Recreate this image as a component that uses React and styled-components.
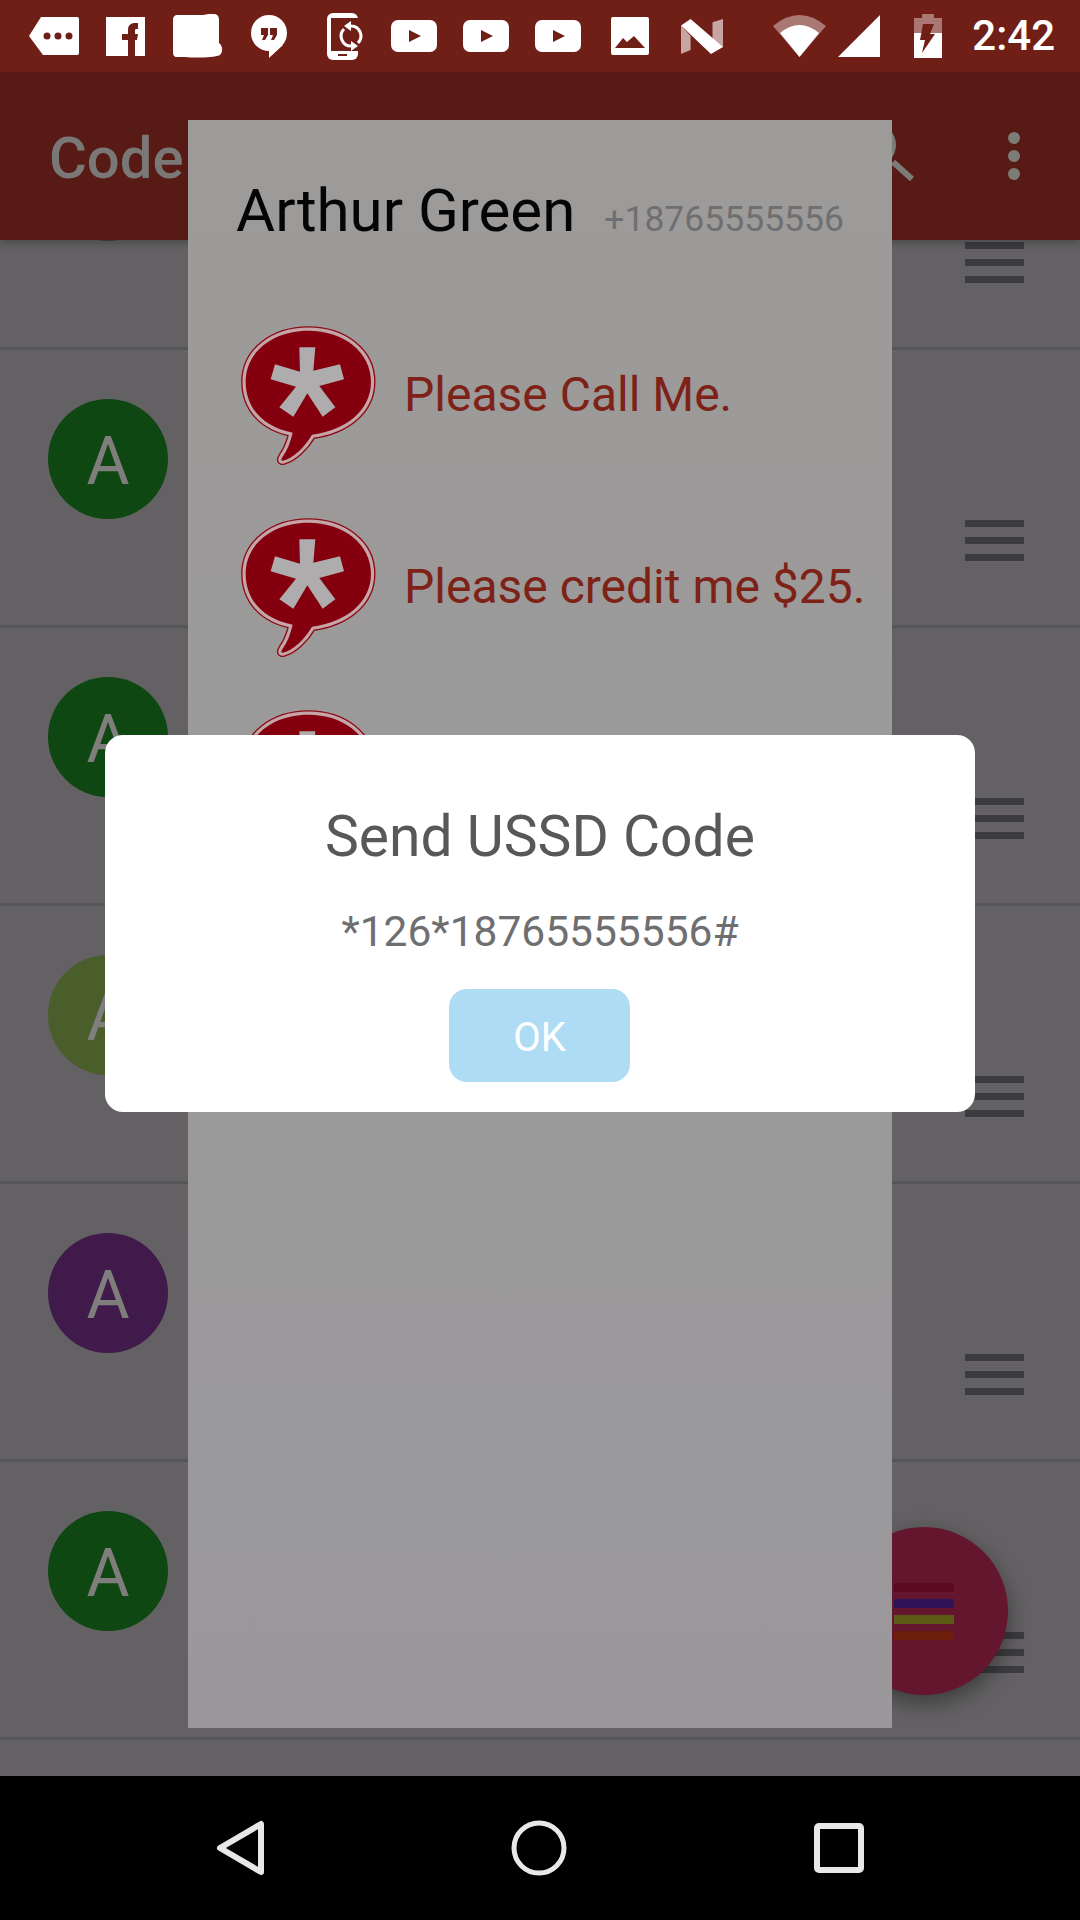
import React from 'react'
import styled, { createGlobalStyle } from 'styled-components';

const STATUS_BG = '#701f17';

const GlobalStyle = createGlobalStyle`
  html, body {
    margin: 0;
    padding: 0;
    background: #000;
  }
  * {
    box-sizing: border-box;
  }
`;

const Screen = styled.div`
  width: 1080px;
  height: 1920px;
  position: relative;
  overflow: hidden;
  display: flex;
  flex-direction: column;
  background-color: #636163;
  font-family: Roboto, "Liberation Sans", sans-serif;
`;

const StatusBar = styled.div`
  height: 72px;
  flex: none;
  display: flex;
  align-items: center;
  padding: 0 25px 0 29px;
  background-color: ${STATUS_BG};
  position: relative;
  z-index: 2;
`;

const StatusIcon = styled.svg`
  flex: none;
  display: block;
  margin-left: ${(p) => p.$gap || 0}px;
`;

const Clock = styled.span`
  margin-left: auto;
  font-size: 42px;
  font-weight: 500;
  line-height: 1;
  color: #fff;
`;

const Toolbar = styled.div`
  height: 168px;
  flex: none;
  display: flex;
  align-items: center;
  padding: 0 60px 0 49px;
  background-color: #571a14;
  position: relative;
  z-index: 1;
  box-shadow: 0 3px 8px rgba(0, 0, 0, 0.25);
`;

const ToolbarTitle = styled.div`
  font-size: 58px;
  font-weight: 500;
  color: #7a7877;
  margin-top: 4px;
`;

const SearchIcon = styled.svg`
  margin-left: auto;
  display: block;
`;

const MoreDots = styled.div`
  margin-left: 93px;
  display: flex;
  flex-direction: column;
  gap: 6px;
`;

const Dot = styled.div`
  width: 12px;
  height: 12px;
  border-radius: 50%;
  background-color: #7c7c78;
`;

const List = styled.div`
  flex: 1;
  min-height: 0;
  margin-top: -168px;
`;

const Row = styled.div`
  height: 278px;
  display: flex;
  align-items: flex-start;
  padding: 49px 56px 0 48px;
  border-bottom: 3px solid #565557;
`;

const Avatar = styled.div`
  width: 120px;
  height: 120px;
  border-radius: 50%;
  display: flex;
  align-items: center;
  justify-content: center;
  background-color: ${(p) => p.$color};
  color: #7f7e7d;
  font-size: 66px;
  padding-top: 5px;
`;

const Handle = styled.div`
  margin-left: auto;
  margin-top: 121px;
  width: 59px;
  display: flex;
  flex-direction: column;
  gap: 10px;
`;

const HandleBar = styled.div`
  height: 7px;
  background-color: #3c3b3e;
`;

const Fab = styled.div`
  position: absolute;
  left: 840px;
  top: 1527px;
  width: 168px;
  height: 168px;
  border-radius: 50%;
  background-color: #64162f;
  box-shadow: 0 8px 22px rgba(0, 0, 0, 0.4);
  display: flex;
  flex-direction: column;
  align-items: center;
  justify-content: center;
  gap: 7px;
`;

const FabBar = styled.div`
  width: 60px;
  height: 9px;
  background-color: ${(p) => p.$color};
`;

const NavBar = styled.div`
  height: 144px;
  flex: none;
  display: flex;
  align-items: center;
  justify-content: center;
  gap: 247px;
  background-color: #000;
  position: relative;
  z-index: 1;
`;

const NavIcon = styled.svg`
  display: block;
`;

const Sheet = styled.div`
  position: absolute;
  left: 188px;
  top: 120px;
  width: 704px;
  height: 1608px;
  z-index: 3;
  background: linear-gradient(#9c9b99, #9a989b);
  padding: 56px 0 0 48px;
`;

const SheetHeader = styled.div`
  display: flex;
  align-items: baseline;
  gap: 29px;
`;

const ContactName = styled.div`
  font-size: 60px;
  line-height: 70px;
  color: #050505;
`;

const ContactPhone = styled.div`
  font-size: 35.5px;
  color: #6f6e70;
`;

const Messages = styled.div`
  display: flex;
  flex-direction: column;
  gap: 53px;
  margin: 79px 0 0 5px;
`;

const Message = styled.div`
  display: flex;
  align-items: flex-start;
  gap: 28px;
  height: 139px;
`;

const MessageText = styled.div`
  font-size: 48px;
  line-height: 56px;
  margin-top: 42px;
  color: #7e2218;
  white-space: nowrap;
`;

const Dialog = styled.div`
  position: absolute;
  left: 105px;
  top: 735px;
  width: 870px;
  height: 377px;
  z-index: 4;
  border-radius: 18px;
  background-color: #fff;
  display: flex;
  flex-direction: column;
  align-items: center;
  padding-top: 69px;
`;

const DialogTitle = styled.div`
  font-size: 57px;
  line-height: 66px;
  color: #58585a;
`;

const DialogCode = styled.div`
  font-size: 42.5px;
  line-height: 50px;
  margin-top: 37px;
  color: #6f6e71;
`;

const OkButton = styled.div`
  width: 181px;
  height: 93px;
  margin: 32px 1px 0 0;
  padding-top: 4px;
  border-radius: 18px;
  display: flex;
  align-items: center;
  justify-content: center;
  font-size: 40px;
  color: #fff;
  background-color: #aedcf4;
`;

const bubblePath = 'M338 398 C245 380 197 320 197 245 C197 155 280 92 385 92 C490 92 573 155 573 245 C573 330 500 390 396 404 C375 440 340 475 308 482 C302 482 304 476 308 470 C322 450 332 425 338 398 Z';

const BubbleIcon = () => (
  <svg width="135" height="140" viewBox="183 75 405 420">
    <path d={bubblePath} fill="none" stroke="#8b0a14" strokeWidth="27" strokeLinejoin="round" />
    <path d={bubblePath} fill="none" stroke="#c4a6a8" strokeWidth="19" strokeLinejoin="round" />
    <path d={bubblePath} fill="#85000e" />
    <polygon
      fill="#aeacad"
      points="358,142 406,142 400,212 480,193 492,238 418,258 466,322 428,350 382,280 340,350 298,322 348,260 272,238 285,193 360,215"
    />
  </svg>
);

const YouTubeIcon = ({ gap }) => (
  <StatusIcon $gap={gap} width="46" height="32" viewBox="0 0 46 32">
    <rect width="46" height="32" rx="7" fill="#fff" />
    <polygon points="18,10 30,16 18,22" fill={STATUS_BG} />
  </StatusIcon>
);

const StatusIcons = () => (
  <>
    <StatusIcon width="50" height="38" viewBox="0 0 50 38">
      <path d="M12 0 H48 a2 2 0 0 1 2 2 V36 a2 2 0 0 1 -2 2 H14 L0 19 Z" fill="#fff" />
      <circle cx="18" cy="19" r="3.5" fill={STATUS_BG} />
      <circle cx="29" cy="19" r="3.5" fill={STATUS_BG} />
      <circle cx="40" cy="19" r="3.5" fill={STATUS_BG} />
    </StatusIcon>
    <StatusIcon $gap={27} width="39" height="39" viewBox="0 0 39 39">
      <rect width="39" height="39" fill="#fff" />
      <path d="M22 39 V23 H16 V17 H22 V13 C22 8 25 6 29 6 H32 V12 H30 C29 12 29 13 29 14 V17 H32 L31 23 H29 V39 Z" fill={STATUS_BG} />
    </StatusIcon>
    <StatusIcon $gap={28} width="50" height="44" viewBox="0 0 50 44">
      <path d="M4 1 H30 C34 0 41 -1 44 1 C46 2 46 5 46 8 V29 C50 32 50 38 47 41 C40 44 20 44 12 43 H4 C1 43 0 41 0 38 V5 C0 3 2 1 4 1 Z" fill="#fff" />
    </StatusIcon>
    <StatusIcon $gap={28} width="36" height="43" viewBox="0 0 36 43">
      <circle cx="18" cy="18" r="18" fill="#fff" />
      <path d="M18 30 V43 L32 30 Z" fill="#fff" />
      <path d="M10 13 H17 V20 L14 25 H11 L13 20 H10 Z M19 13 H26 V20 L23 25 H20 L22 20 H19 Z" fill={STATUS_BG} />
    </StatusIcon>
    <StatusIcon $gap={40} width="36" height="47" viewBox="0 0 36 47">
      <rect width="31" height="47" rx="6" fill="#fff" />
      <rect x="4" y="5" width="30" height="33" fill={STATUS_BG} />
      <rect x="11" y="41" width="9" height="2" fill={STATUS_BG} />
      <path d="M24 13 A10 10 0 0 1 31 30" fill="none" stroke="#fff" strokeWidth="3" />
      <path d="M24 33 A10 10 0 0 1 17 16" fill="none" stroke="#fff" strokeWidth="3" />
      <polygon points="24,8 24,18 17,13" fill="#fff" />
      <polygon points="24,28 24,38 31,33" fill="#fff" />
    </StatusIcon>
    <YouTubeIcon gap={28} />
    <YouTubeIcon gap={26} />
    <YouTubeIcon gap={26} />
    <StatusIcon $gap={30} width="38" height="38" viewBox="0 0 38 38">
      <rect width="38" height="38" rx="2" fill="#fff" />
      <polygon points="4,31 12,21 16,25 23,19 34,31" fill={STATUS_BG} />
    </StatusIcon>
    <StatusIcon $gap={32} width="42" height="35" viewBox="0 0 42 35">
      <polygon points="0,6.6 0,35 9.6,31 9.6,17" fill="#fff" opacity="0.6" />
      <polygon points="42,0 42,28 31.5,32 31.5,3.3" fill="#fff" opacity="0.6" />
      <polygon points="0,6.6 9.6,0 42,28 30,35" fill="#fff" />
    </StatusIcon>
    <StatusIcon $gap={50} width="53" height="42" viewBox="0 0 53 42">
      <path d="M26.5 42 L0 11 Q26.5 -11 53 11 Z" fill="#fff" opacity="0.4" />
      <path d="M26.5 42 L7 18 Q26.5 2 46 18 Z" fill="#fff" />
    </StatusIcon>
    <StatusIcon $gap={12} width="42" height="42" viewBox="0 0 42 42">
      <polygon points="42,0 42,42 0,42" fill="#fff" />
    </StatusIcon>
    <StatusIcon $gap={34} width="28" height="44" viewBox="0 0 28 44">
      <path d="M8 0 H20 V4 H28 V19 H0 V4 H8 Z" fill="#fff" opacity="0.4" />
      <rect y="19" width="28" height="25" fill="#fff" />
      <polygon points="9,10 20,10 16,20 21,20 8,39 11,26 6,26" fill={STATUS_BG} />
    </StatusIcon>
  </>
);

const rows = ['#3c4a3a', '#0f4712', '#0f4712', '#4a5e2c', '#3f1a4a', '#0f4712', '#0f4712'];
const fabBars = ['#5c0a24', '#2f1557', '#5c5a14', '#6c1e0a'];

export default function App() {
  return (
    <Screen>
      <GlobalStyle />
      <StatusBar>
        <StatusIcons />
        <Clock>2:42</Clock>
      </StatusBar>
      <Toolbar>
        <ToolbarTitle>Code</ToolbarTitle>
        <SearchIcon width="65" height="82" viewBox="0 0 65 82">
          <circle cx="24" cy="30" r="19" fill="none" stroke="#7b7b78" strokeWidth="6" />
          <line x1="43" y1="47" x2="62" y2="64" stroke="#7b7b78" strokeWidth="6" />
        </SearchIcon>
        <MoreDots>
          <Dot />
          <Dot />
          <Dot />
        </MoreDots>
      </Toolbar>
      <List>
        {rows.map((color, i) => (
          <Row key={i}>
            <Avatar $color={color}>{i > 0 ? 'A' : ''}</Avatar>
            <Handle>
              <HandleBar />
              <HandleBar />
              <HandleBar />
            </Handle>
          </Row>
        ))}
      </List>
      <Fab>
        {fabBars.map((color) => (
          <FabBar key={color} $color={color} />
        ))}
      </Fab>
      <Sheet>
        <SheetHeader>
          <ContactName>Arthur Green</ContactName>
          <ContactPhone>+18765555556</ContactPhone>
        </SheetHeader>
        <Messages>
          <Message>
            <BubbleIcon />
            <MessageText>Please Call Me.</MessageText>
          </Message>
          <Message>
            <BubbleIcon />
            <MessageText>Please credit me $25.</MessageText>
          </Message>
          <Message>
            <BubbleIcon />
          </Message>
        </Messages>
      </Sheet>
      <Dialog>
        <DialogTitle>Send USSD Code</DialogTitle>
        <DialogCode>*126*18765555556#</DialogCode>
        <OkButton>OK</OkButton>
      </Dialog>
      <NavBar>
        <NavIcon width="48" height="56" viewBox="0 0 48 56">
          <path d="M45 4 V52 L4 28 Z" fill="none" stroke="#e8e8e8" strokeWidth="6" strokeLinejoin="round" />
        </NavIcon>
        <NavIcon width="56" height="56" viewBox="0 0 56 56">
          <circle cx="28" cy="28" r="25" fill="none" stroke="#e8e8e8" strokeWidth="5" />
        </NavIcon>
        <NavIcon width="50" height="50" viewBox="0 0 50 50">
          <rect x="3" y="3" width="44" height="44" rx="2" fill="none" stroke="#e8e8e8" strokeWidth="6" />
        </NavIcon>
      </NavBar>
    </Screen>
  )
}
